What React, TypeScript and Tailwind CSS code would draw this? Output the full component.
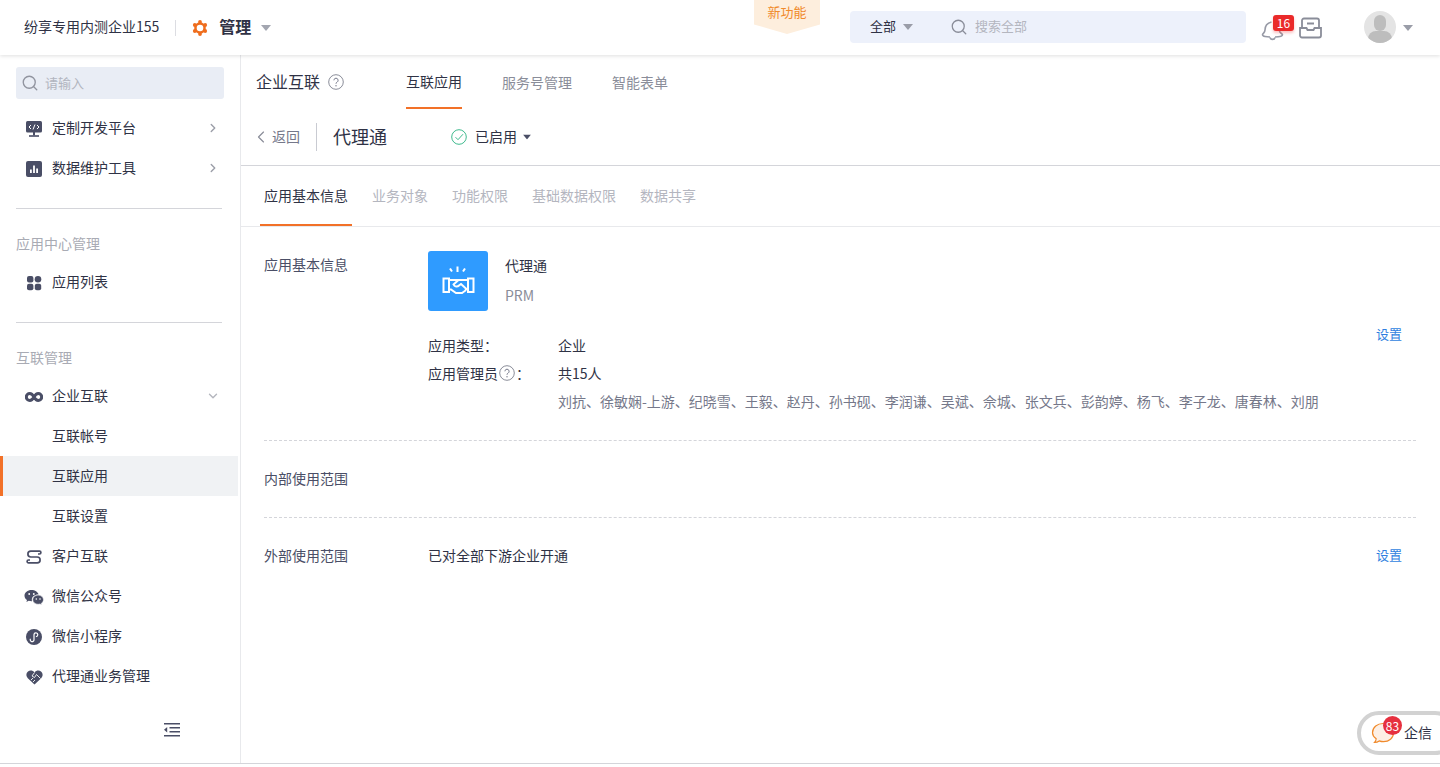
import React from "react";
import { ChevronRight, ChevronDown, ChevronLeft, Search } from "lucide-react";

const Caret = ({ className = "" }: { className?: string }) => (
  <svg width="10" height="6" viewBox="0 0 10 6" className={className}><path d="M0 0h10L5 6z" fill="currentColor" /></svg>
);

const Help = ({ size = 16 }: { size?: number }) => (
  <svg width={size} height={size} viewBox="0 0 16 16" fill="none" className="shrink-0">
    <circle cx="8" cy="8" r="7.3" stroke="#8a8d99" strokeWidth="1" />
    <path d="M5.9 6.3a2.1 2.1 0 1 1 3.2 1.8c-.7.4-1.1.8-1.1 1.6" stroke="#75788a" strokeWidth="1" fill="none" />
    <circle cx="8" cy="11.7" r=".7" fill="#75788a" />
  </svg>
);

const I = "#4a4e66";
const icons: Record<string, React.ReactNode> = {
  dev: (
    <svg width="16" height="16" viewBox="0 0 16 16"><rect x="0" y="0" width="16" height="11.5" rx="1.5" fill={I} /><rect x="7" y="11" width="2" height="3.4" fill={I} /><rect x="3" y="14.2" width="10" height="1.6" fill={I} /><path d="M5 4l-2 2 2 2M11 4l2 2-2 2M9 3.5L7 8.5" stroke="#fff" strokeWidth="1" fill="none" /></svg>
  ),
  data: (
    <svg width="16" height="16" viewBox="0 0 16 16"><rect width="16" height="16" rx="2" fill={I} /><path d="M4 8.5h1.8V12H4zM7.1 4.500h1.800V12H7.100zM10.200 7.500h1.800V12h-1.800z" fill="#fff" /></svg>
  ),
  apps: (
    <svg width="16" height="16" viewBox="0 0 16 16" fill={I}><rect x="1" y="1" width="6.4" height="6.4" rx="2" /><circle cx="12" cy="4.2" r="3.3" /><rect x="1" y="8.8" width="6.4" height="6.4" rx="2" /><rect x="8.8" y="8.8" width="6.4" height="6.4" rx="2" /></svg>
  ),
  link: (
    <svg width="18" height="12" viewBox="0 0 18 12" fill="none"><path d="M9 6C7.800 3.800 6.500 2.500 4.800 2.500a3.500 3.500 0 0 0 0 7C6.500 9.500 7.800 8.200 9 6c1.200-2.200 2.500-3.500 4.200-3.500a3.500 3.500 0 0 1 0 7C11.500 9.500 10.200 8.200 9 6z" stroke={I} strokeWidth="3" /></svg>
  ),
  client: (
    <svg width="16" height="16" viewBox="0 0 16 16" fill="none" stroke={I} strokeWidth="1.700"><path d="M12 5h1.500a1.300 1.300 0 0 0 0-2.800H4.800a2.900 2.900 0 0 0 0 5.800h6.400a2.900 2.900 0 0 1 0 5.800H2.500a1.300 1.300 0 0 1 0-2.800H4" /></svg>
  ),
  wechat: (
    <svg width="20" height="16" viewBox="0 0 20 16" fill={I}><path d="M7.500 1C3.600 1 .5 3.500.5 6.700c0 1.800 1 3.300 2.500 4.400L2.400 13l2.300-1.200c.9.200 1.800.4 2.800.4h.5a5 5 0 0 1-.2-1.400c0-3 2.800-5.300 6.400-5.300h.4C13.900 3 11 1 7.500 1z" /><path d="M19.500 10.700c0-2.600-2.500-4.600-5.400-4.600-3 0-5.400 2-5.400 4.600s2.400 4.600 5.400 4.600c.6 0 1.300-.1 1.900-.3l1.800 1-.5-1.600c1.300-.9 2.200-2.200 2.200-3.700z" stroke="#fff" strokeWidth=".6" /><circle cx="12.300" cy="10" r=".8" fill="#fff" /><circle cx="16" cy="10" r=".8" fill="#fff" /><circle cx="5.200" cy="5" r=".9" fill="#fff" /><circle cx="9.800" cy="5" r=".9" fill="#fff" /></svg>
  ),
  mini: (
    <svg width="16" height="16" viewBox="0 0 16 16"><circle cx="8" cy="8" r="8" fill={I} /><path d="M4.500 9.700a1.900 1.900 0 1 0 3.500 1V5.600a1.900 1.900 0 1 1 1.900 2" stroke="#fff" strokeWidth="1.200" fill="none" /></svg>
  ),
  heart: (
    <svg width="17" height="16" viewBox="0 0 17 16"><path d="M8.500 15.500L1.800 9.200C-.2 7.200 0 4 2 2.400c2-1.500 4.800-1.100 6.500 1 1.700-2.100 4.500-2.500 6.500-1 2 1.600 2.200 4.800.2 6.800z" fill={I} /><path d="M8.500 3.500L6 7l2.500 1.500 2-3 4 4M5 11l2-2M7 13l2-2" stroke="#fff" strokeWidth=".9" fill="none" /></svg>
  ),
};

function Row({ icon, label, chevron, active }: { icon?: string; label: string; chevron?: "r" | "d"; active?: boolean }) {
  return (
    <div className={`h-10 pb-[2px] flex items-center relative pr-[20px] text-[14px] text-[#2f3245] ${active ? "bg-[#f0f2f4] mr-[2px] border-l-[3px] border-[#f27128] pl-[49px]" : icon ? "pl-[24px]" : "pl-[52px]"}`}>
      {icon && <span className="w-[20px] mr-[8px] mt-[4px] h-4 flex items-center justify-center shrink-0">{icons[icon]}</span>}
      <span>{label}</span>
      {chevron === "r" && <ChevronRight size={14} strokeWidth={2.4} className="ml-auto mt-[2px] text-[#9b9ea8]" />}
      {chevron === "d" && <ChevronDown size={14} strokeWidth={2.400} className="ml-auto mt-[2px] text-[#b4b6be]" />}
    </div>
  );
}

const FONT = "[font-family:'Noto_Sans_CJK_SC','Noto_Sans',sans-serif]";

export default function App() {
  return (
    <div className={`w-[1440px] h-[767px] overflow-hidden bg-white flex flex-col relative ${FONT}`}>
      {/* top bar */}
      <header className="h-[55px] shrink-0 flex items-center bg-white shadow-[0_1px_4px_rgba(0,0,0,0.13)] relative z-10">
        <span className="ml-[24px] mb-[2px] text-[14px] text-[#2f3245]">纷享专用内测企业155</span>
        <span className="ml-[16px] w-px h-4 bg-[#dcdde2]" />
        <svg width="16" height="16" viewBox="0 0 16 16" className="ml-[16px]" fill="#ef6d1d">
          <circle cx="8" cy="8" r="5.800" />
          <circle cx="8" cy="2" r="1.900" /><circle cx="13.200" cy="5" r="1.900" /><circle cx="13.200" cy="11" r="1.900" />
          <circle cx="8" cy="14" r="1.900" /><circle cx="2.800" cy="11" r="1.900" /><circle cx="2.800" cy="5" r="1.900" />
          <circle cx="8" cy="8" r="3.300" fill="#fff" />
        </svg>
        <span className="ml-[11px] mb-[3px] text-[16px] font-bold text-[#2f3245]">管理</span>
        <Caret className="ml-[10px] text-[#a3a6b0]" />

        <div className="ml-auto relative self-stretch w-[66px] mr-[30px]">
          <div className="absolute top-0 left-0 w-[66px] h-[34px] bg-[#fdeedd] [clip-path:polygon(0_0,100%_0,100%_72%,50%_100%,0_72%)] flex justify-center pt-[2px] text-[13px] leading-5 text-[#f08a2c]">新功能</div>
        </div>
        <div className="w-[396px] h-8 mb-[1px] rounded-[4px] bg-[#edf1fb] flex items-center text-[13px]">
          <span className="ml-[20px] mb-[2px] text-[#2f3245]">全部</span>
          <Caret className="ml-[7px] text-[#9a9da8]" />
          <Search size={18} strokeWidth={1.700} className="ml-[37px] text-[#8a8d99]" />
          <span className="ml-[7px] mb-[2px] text-[#b4b6bf]">搜索全部</span>
        </div>
        <div className="relative ml-[15px] w-[24px] h-[24px]">
          <svg width="24" height="24" viewBox="0 0 24 24" fill="none" className="mt-[2px]"><path d="M9 19c-3 0-7.500-.4-7.500-2.200 0-1.300 2.500-2 2.500-4.800 0-3.800 2.500-7 6.500-8M17.500 9c.8 1.500 1 2.500 1 4 0 2 3 2.700 3 3.800 0 1.800-4.500 2.200-7.500 2.200" stroke="#979aa6" strokeWidth="1.600" /><path d="M9 19.500c.5 2.500 4.500 2.500 5 0" stroke="#979aa6" strokeWidth="1.600" /></svg>
          <span className="absolute -top-[1px] left-[12px] w-[21px] h-4 rounded-[3px] bg-[#ea2a2a] text-white text-[12px] leading-4 text-center shadow-[0_2px_3px_rgba(234,42,42,0.3)]">16</span>
        </div>
        <svg width="23" height="22" viewBox="0 0 23 22" fill="none" className="ml-[14px]">
          <path d="M3 11V3.500a2 2 0 0 1 2-2h13a2 2 0 0 1 2 2V11M1 11h6.500l1 2h6l1-2H22v7.500a2 2 0 0 1-2 2H3a2 2 0 0 1-2-2zM8 6.500h7" stroke="#8a8d99" strokeWidth="1.800" />
        </svg>
        <div className="ml-[42px] mb-[1px] w-8 h-8 rounded-full bg-[#e4e4e4] overflow-hidden relative">
          <span className="absolute top-[4px] left-[10px] w-3 h-[16px] rounded-full bg-[#bdbdbd]" />
          <span className="absolute top-[20px] left-[4px] w-6 h-3 rounded-t-[8px] bg-[#bdbdbd]" />
        </div>
        <Caret className="ml-[7px] mr-[27px] text-[#9a9da8]" />
      </header>

      <div className="flex-1 flex min-h-0">
        {/* sidebar */}
        <aside className="w-[241px] shrink-0 border-r border-[#e8e9ec] flex flex-col">
          <div className="mt-[12px] mx-[16px] h-8 w-[208px] rounded-[3px] bg-[#e9edf5] flex items-center pl-[5px] text-[13px] text-[#b2b5bf]">
            <Search size={18} strokeWidth={1.800} className="text-[#91949f]" />
            <span className="ml-[6px]">请输入</span>
          </div>
          <div className="mt-[9px]">
            <Row icon="dev" label="定制开发平台" chevron="r" />
            <Row icon="data" label="数据维护工具" chevron="r" />
          </div>
          <div className="mt-[20px] mx-[16px] w-[206px] h-px bg-[#d4d5da]" />
          <div className="mt-[24px] ml-[16px] text-[14px] leading-5 text-[#a9abb4]">应用中心管理</div>
          <div className="mt-[9px]"><Row icon="apps" label="应用列表" /></div>
          <div className="mt-[20px] mx-[16px] w-[206px] h-px bg-[#d4d5da]" />
          <div className="mt-[24px] ml-[16px] text-[14px] leading-5 text-[#a9abb4]">互联管理</div>
          <div className="mt-[9px]">
            <Row icon="link" label="企业互联" chevron="d" />
            <Row label="互联帐号" />
            <Row label="互联应用" active />
            <Row label="互联设置" />
            <Row icon="client" label="客户互联" />
            <Row icon="wechat" label="微信公众号" />
            <Row icon="mini" label="微信小程序" />
            <Row icon="heart" label="代理通业务管理" />
          </div>
          <div className="mt-[27px] ml-[164px]">
            <svg width="16" height="14" viewBox="0 0 16 14" fill={I}><path d="M0 0h16v1.600H0zM5.500 4H16v1.600H5.500zM5.500 8H16v1.600H5.500zM0 12h16v1.600H0zM3.200 4v5.500L0 6.800z" /></svg>
          </div>
        </aside>

        {/* main */}
        <main className="flex-1 min-w-0 flex flex-col text-[14px] text-[#2f3245]">
          <div className="h-[54px] shrink-0 flex pl-[15px]">
            <div className="flex items-center h-[54px]">
              <span className="text-[16px] mb-[2px]">企业互联</span>
              <span className="ml-[8px]"><Help /></span>
            </div>
            <div className="ml-[62px] flex gap-[40px]">
              <div className="h-[54px] flex items-center border-b-2 border-[#f27128]">互联应用</div>
              <div className="h-[54px] flex items-center text-[#8a8d99]">服务号管理</div>
              <div className="h-[54px] flex items-center text-[#8a8d99]">智能表单</div>
            </div>
          </div>
          <div className="h-[57px] shrink-0 flex items-center pl-[10px] border-b border-[#d4d5da]">
            <ChevronLeft size={20} strokeWidth={1.400} className="text-[#8a8d99]" />
            <span className="ml-[1px] mb-[2px] text-[#75788a]">返回</span>
            <span className="ml-[16px] w-px h-7 bg-[#c9cbd2]" />
            <span className="ml-[16px] mb-[2px] text-[18px]">代理通</span>
            <svg width="16" height="16" viewBox="0 0 16 16" fill="none" className="ml-[64px]"><circle cx="8" cy="8" r="7.300" stroke="#3fba8e" strokeWidth="1" /><path d="M4.500 8.200l2.500 2.500 5-5.500" stroke="#3fba8e" strokeWidth="1" /></svg>
            <span className="ml-[8px] mb-[2px]">已启用</span>
            <Caret className="ml-[5px] scale-[0.8] text-[#4a4e66]" />
          </div>
          <div className="h-[61px] shrink-0 flex pl-[19px] gap-[16px] border-b border-[#e8e9ec]">
            <div className="px-[4px] flex items-center border-b-2 border-[#f27128] h-[60px]">应用基本信息</div>
            <div className="px-[4px] pb-[2px] flex items-center h-[60px] text-[#b4b6bf]">业务对象</div>
            <div className="px-[4px] pb-[2px] flex items-center h-[60px] text-[#b4b6bf]">功能权限</div>
            <div className="px-[4px] pb-[2px] flex items-center h-[60px] text-[#b4b6bf]">基础数据权限</div>
            <div className="px-[4px] pb-[2px] flex items-center h-[60px] text-[#b4b6bf]">数据共享</div>
          </div>

          <section className="mx-[23px] w-[1152px] h-[214px] border-b border-dashed border-[#d4d5da] flex relative">
            <div className="w-[164px] pt-[27px] leading-5 text-[#4a4e66]">应用基本信息</div>
            <div className="flex-1 pt-[24px]">
              <div className="flex">
                <div className="w-[60px] h-[60px] rounded-[3px] bg-[#2f9bff]">
                  <svg width="60" height="60" viewBox="0 0 60 60" fill="none" stroke="#fff" strokeWidth="2">
                    <path d="M29.500 15.500v5.500M22 17.500l2 3M37 17.500l-2 3" />
                    <path d="M15.500 27.500h5.500v13.500h-5.500zM45.500 27.500h-5.500v13.500h5.500z" />
                    <path d="M21 29h9.500l-5 4.500c1 2.500 4 2.500 5.500 1l2-1.500 6 5.500M40 29h-9.500M21 38.500h2l5 3.500h6l3.500-2.500.5-1.500h2" />
                  </svg>
                </div>
                <div className="ml-[17px]">
                  <div className="mt-[4px] leading-5">代理通</div>
                  <div className="mt-[10px] leading-5 text-[#8a8d99]">PRM</div>
                </div>
              </div>
              <div className="mt-[24px] flex leading-5">
                <span className="w-[130px]">应用类型：</span><span>企业</span>
              </div>
              <div className="mt-[8px] flex leading-5">
                <span className="w-[130px] flex items-center">应用管理员<span className="mx-[1px]"><Help /></span>：</span><span>共15人</span>
              </div>
              <div className="mt-[8px] ml-[130px] leading-5 text-[#75788a] whitespace-nowrap">刘抗、徐敏娴-上游、纪晓雪、王毅、赵丹、孙书砚、李润谦、吴斌、佘城、张文兵、彭韵婷、杨飞、李子龙、唐春林、刘朋</div>
            </div>
            <a className="absolute right-[14px] top-[97px] text-[13px] leading-5 text-[#2f7fe0]">设置</a>
          </section>
          <section className="mx-[23px] w-[1152px] h-[77px] border-b border-dashed border-[#d4d5da] flex items-center">
            <span className="mb-[2px] text-[#4a4e66]">内部使用范围</span>
          </section>
          <section className="mx-[23px] w-[1152px] h-[77px] flex items-center">
            <span className="w-[164px] mb-[2px] text-[#4a4e66]">外部使用范围</span>
            <span className="mb-[2px]">已对全部下游企业开通</span>
            <a className="ml-auto mr-[14px] mb-[4px] text-[13px] text-[#2f7fe0]">设置</a>
          </section>
        </main>
      </div>
      <div className="h-[4px] shrink-0 border-t border-[#d4d5da] bg-white" />

      {/* floating chat */}
      <div className="absolute left-[1357px] top-[711px] w-[100px] h-[44px] rounded-full border-[4px] border-[#d2d2d2] bg-white flex items-center">
        <span className="relative ml-[10px] w-[24px] h-[24px]">
          <svg width="24" height="24" viewBox="0 0 24 24" fill="#fdf0e6" stroke="#f08a2c" strokeWidth="1.200" className="mt-[1px]"><path d="M12 1.500c5.500 0 10.500 3.800 10.500 9.200s-4.500 9-10 9c-1.500 0-3-.3-4.300-.8-1.200.9-2.800 1.600-4.700 1.500 1-1 1.600-2.300 1.700-3.600C2.900 15 1.500 13 1.500 10.700c0-5.400 5-9.200 10.500-9.200z" /></svg>
          <span className="absolute -top-[5px] left-[12px] w-[19px] h-[19px] rounded-full bg-[#e6303f] text-white text-[12px] leading-[19px] text-center">83</span>
        </span>
        <span className="ml-[9px] mb-[2px] text-[14px] text-[#2f3245]">企信</span>
      </div>
    </div>
  );
}
